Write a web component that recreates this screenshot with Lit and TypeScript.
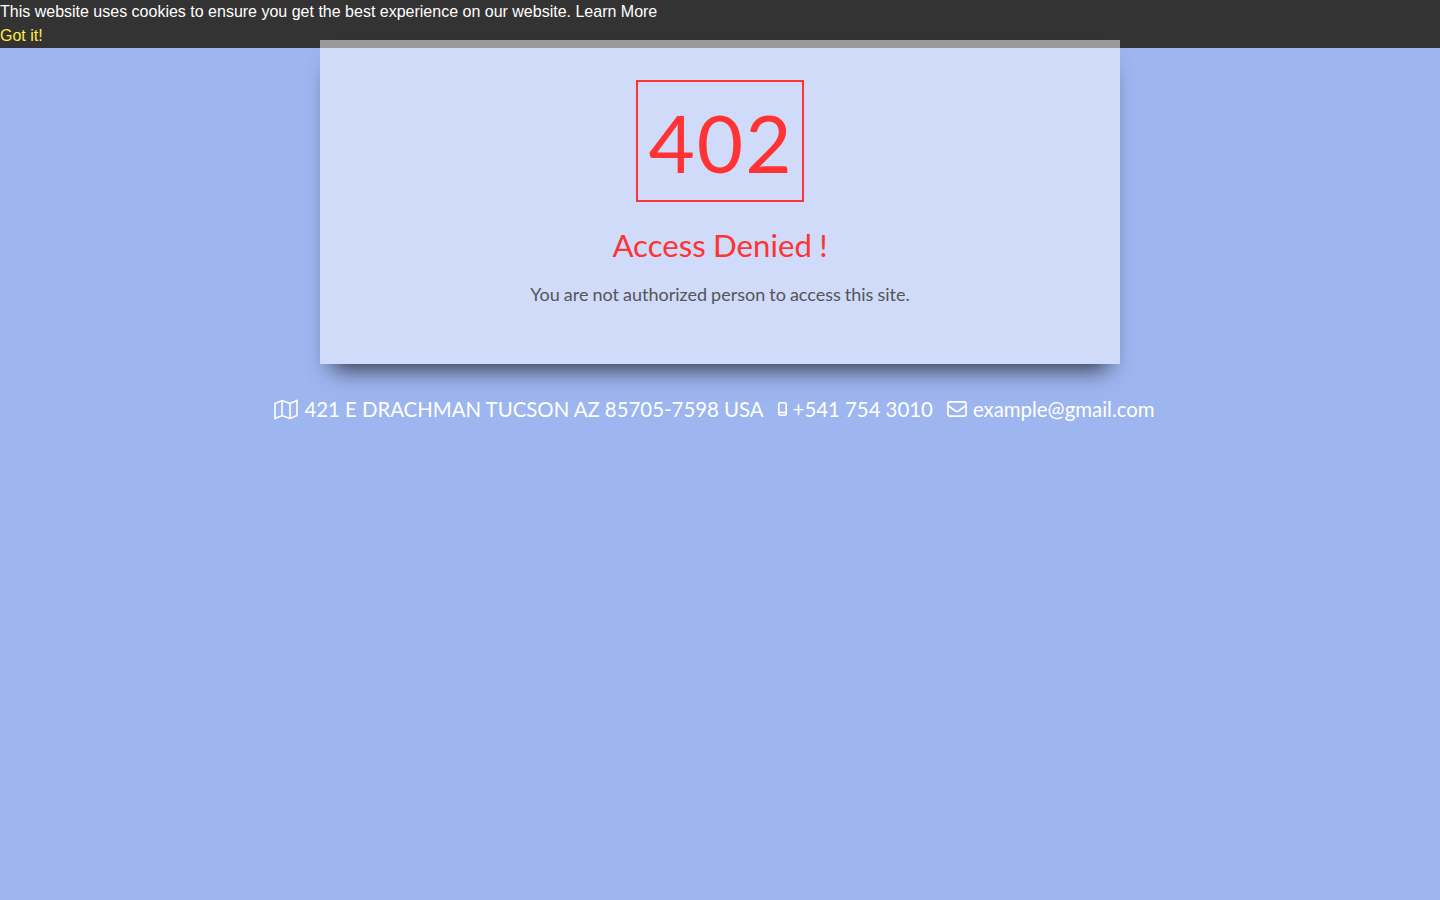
import { LitElement, html, css } from "lit";
import { customElement } from "lit/decorators.js";

@customElement("app-root")
export class AppRoot extends LitElement {
  static styles = css`
    :host {
      display: block;
      min-height: 900px;
      background: #9eb6f0;
      font-family: Lato, sans-serif;
      position: relative;
    }
    .cookie {
      position: absolute;
      top: 0;
      left: 0;
      right: 0;
      height: 48px;
      background: #333;
      color: #fff;
      font: 16px/24px "Liberation Sans", Arial, sans-serif;
    }
    .got { color: #ffee44; display: block; }
    .wrap {
      position: relative;
      display: flex;
      flex-direction: column;
      align-items: center;
      padding-top: 40px;
    }
    .card {
      width: 800px;
      height: 324px;
      box-sizing: border-box;
      padding-top: 40px;
      background: rgba(255, 255, 255, 0.5);
      box-shadow: 0 17px 22px -12px rgba(0, 0, 0, 0.72);
      display: flex;
      flex-direction: column;
      align-items: center;
    }
    .code {
      width: 168px;
      height: 122px;
      box-sizing: border-box;
      border: 2px solid #f33;
      color: #f33;
      font-size: 80px;
      letter-spacing: 2px;
      text-indent: 2px;
      line-height: 120px;
      text-align: center;
    }
    h1 {
      margin: 23px 0 0;
      color: #f33;
      font-size: 31.2px;
      word-spacing: -0.7px;
      line-height: 40px;
      font-weight: 400;
    }
    p {
      margin: 16px 0 0;
      color: #555;
      font-size: 18px;
      word-spacing: -0.6px;
      line-height: 26px;
    }
    .contact {
      margin: 31px 11px 0 0;
      display: flex;
      gap: 14px;
      color: #fff;
      font-size: 20.4px;
      word-spacing: -0.1px;
      line-height: 28px;
    }
    .item { display: flex; align-items: center; gap: 6px; }
    svg { display: block; fill: none; stroke: #fff; stroke-width: 1.6; }
  `;

  render() {
    return html`
      <div class="cookie">
        <div>This website uses cookies to ensure you get the best experience on our website. <a>Learn More</a></div>
        <a class="got">Got it!</a>
      </div>
      <div class="wrap">
        <div class="card">
          <div class="code">402</div>
          <h1>Access Denied !</h1>
          <p>You are not authorized person to access this site.</p>
        </div>
        <div class="contact">
          <span class="item">
            <svg width="24" height="21" viewBox="0 0 24 21">
              <path d="M1 4.500 8 1.500 16 4.500 23 1.500V16.500L16 19.500 8 16.500 1 19.500Z M8 1.500V16.500 M16 4.500V19.500" />
            </svg>
            421 E DRACHMAN TUCSON AZ 85705-7598 USA
          </span>
          <span class="item">
            <svg width="9" height="14" viewBox="0 0 9 14">
              <rect x="0.800" y="0.800" width="7.400" height="12.400" rx="1.500" />
              <path d="M0.800 10.500H8.200" />
            </svg>
            +541 754 3010
          </span>
          <span class="item">
            <svg width="20" height="16" viewBox="0 0 20 16">
              <rect x="0.900" y="0.900" width="18.200" height="14.200" rx="2" />
              <path d="M1 4.500 8.500 10Q10 11 11.500 10L19 4.500" />
            </svg>
            example@gmail.com
          </span>
        </div>
      </div>
    `;
  }
}
